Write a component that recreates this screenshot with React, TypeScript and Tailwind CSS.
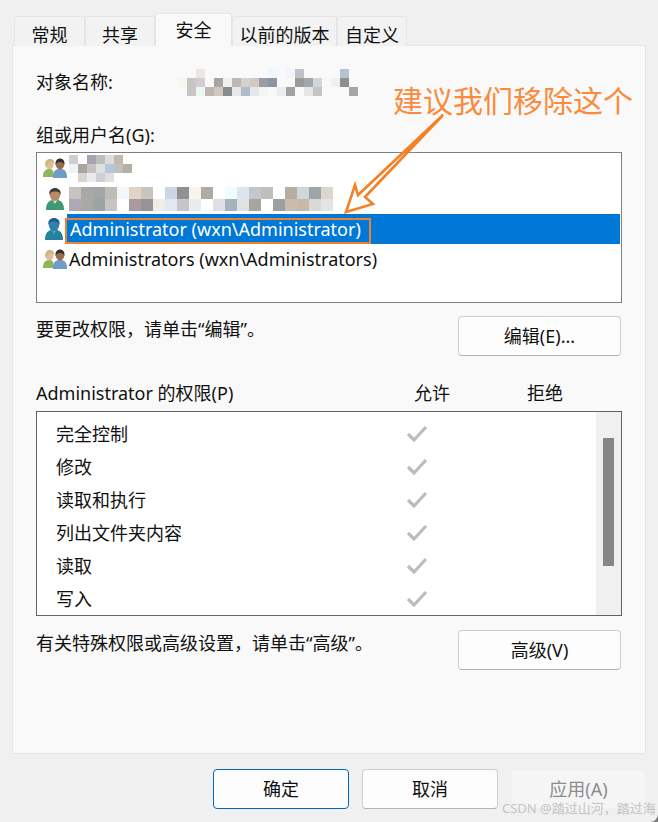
const blur1 = [
  ["", "", "#ece5e0", "", "", "", "", "", "", "", "#eff9fb", "", "#f0f5f7", "#bfc2c8", "", "", "", "", "#b5c3d0", ""],
  ["#f8f6ea", "#c6c6c6", "#d0ced2", "", "#a6a6a6", "#f2f0ea", "#bdb9b2", "#d3d2cf", "#d3c9c0", "#9c9ba8", "#8e95a2", "", "", "#9a9a9a", "#a5a7a8", "#cfd6de", "", "#f0f0f0", "#8f8f8c", ""],
  ["", "#c6c6c6", "#eef6f4", "#bdb5ae", "#cfc8c2", "#878d8f", "#e6e7e8", "#aebccb", "#e6e6e8", "#f0f6f2", "", "#e9edf2", "#a3a1a1", "", "#e6e6e6", "#c4c4c4", "", "", "", "#a6a6a6"],
];

const blur2 = [
  ["#cfcfd2", "", "#a5a3ad", "#bdbdbd", "#dcdcd8", "#c2b8ae", ""],
  ["#eef3f6", "#aaa59d", "#c4c2c4", "#dfe0e2", "#b6c6dc", "#c0c0c0", "#b5b0a6"],
  ["", "#d8d4d0", "#eaeaec", "#d0d0d4", "#dfdfdf", "", ""],
];

const blur3 = [
  ["#c6c4c2", "#a9a8a4", "#a3a6a6", "#bdbdb6", "#f2f7fa", "#e2d3c4", "#c8c4be", "#fff", "#ccd6e4", "#8f9196", "#f8f3ec", "#b0aca4", "#fff", "#f0fdfd", "#dde6ee", "#c4c6cc", "#c0bfbd", "", "#b6ad9e", "#d0d6da", "#9fa4a6", "#dcd6d0"],
  ["#aea8b4", "#aaa8a6", "#9ea2a2", "#c6c4c4", "", "#a89a9e", "#989494", "#f0ece8", "#e2e8f0", "#c6c6c8", "#e8ecee", "", "#e0dfe3", "#a8b2bc", "#e0e2e2", "#a8a4a0", "", "#9ca0a0", "#c8bcae", "#c8b8a8", "#d8d8d8", "#e4e4e4"],
];

function Mosaic({ rows, cell = 9 }: { rows: string[][]; cell?: number }) {
  const cols = rows[0].length;
  return (
    <svg width={cols * cell} height={rows.length * cell} className="block shrink-0">
      {rows.map((row, y) =>
        row.map((color, x) =>
          color ? <rect key={`${x}-${y}`} x={x * cell} y={y * cell} width={cell} height={cell} fill={color} /> : null
        )
      )}
    </svg>
  );
}

function SinglePerson({ selected }: { selected?: boolean }) {
  const hair = selected ? "#1d5f8c" : "#3a3a36";
  const face = selected ? "#2f7fb0" : "#b98a68";
  const body = selected ? "#23829f" : "#3f9a72";
  return (
    <svg width="24" height="24" viewBox="0 0 24 24" className="block shrink-0">
      <path d="M3 23c0-6 2-9 6-10h6c4 1 6 4 6 10z" fill={body} />
      <path d="M9.5 13l2.5 4 2.5-4z" fill={selected ? "#4aa3c4" : "#cfe6d8"} />
      <ellipse cx="12" cy="8" rx="5.2" ry="6" fill={face} />
      <path d="M6.5 8C5.5 3 9 1 12 1s6.5 2 5.5 7c-1-2.500-2-3.500-5.500-3.500S7.500 5.500 6.500 8z" fill={hair} />
    </svg>
  );
}

function GroupPeople() {
  return (
    <svg width="24" height="20" viewBox="0 0 24 20" className="block shrink-0">
      <path d="M0 19c0-5 1.500-7 5-8h3c2 1 3 3 3 8z" fill="#8fb45c" />
      <ellipse cx="6.500" cy="6.500" rx="4" ry="5" fill="#e0bd95" />
      <path d="M2.500 9C1.500 3 4 1 7 1s4.500 2 4 5c-1-1.500-3-2.500-5-2.500-.5 2-2 3-3.500 5.500z" fill="#c9b67c" />
      <path d="M10 20c0-6 1.500-8 5-9h4c3.500 1 5 3 5 9z" fill="#6f9cc8" />
      <ellipse cx="17" cy="6.500" rx="4.200" ry="5" fill="#9a6c4c" />
      <path d="M12.500 7C12 2.500 14.500 0.500 17 0.500S22 2.500 21.500 7c-1-2-2-3-4.500-3s-3.500 1-4.500 3z" fill="#33302c" />
    </svg>
  );
}

function Check() {
  return (
    <svg width="22" height="20" viewBox="0 0 22 20" className="block">
      <path d="M2 10l6 6L20 3" fill="none" stroke="#bcbcbc" strokeWidth="3.200" />
    </svg>
  );
}

function Tab({ label, width }: { label: string; width: string }) {
  return (
    <div className={`${width} h-[30px] bg-[#f2f2f2] border border-b-0 border-[#e5e5e5] rounded-t-[2px] flex items-center justify-center text-[18px] leading-[26px] pt-[6px]`}>
      {label}
    </div>
  );
}

function Btn({ label, width, primary, disabled }: { label: string; width: string; primary?: boolean; disabled?: boolean }) {
  const tone = primary
    ? "bg-[#fdfdfd] border-[#0067c0] text-[#111]"
    : disabled
      ? "bg-[#f5f5f5] border-[#efefef] text-[#8c8c8c]"
      : "bg-[#fdfdfd] border-[#cfcfcf] border-b-[#b4b4b4] text-[#111]";
  return (
    <button className={`${width} h-[40px] rounded-[4px] border flex items-center justify-center text-[18px] ${tone}`}>
      {label}
    </button>
  );
}

const permissions = ["完全控制", "修改", "读取和执行", "列出文件夹内容", "读取", "写入"];

export default function App() {
  return (
    <div className="bg-[#7a7a7a] w-[658px] h-[822px]">
      <div className="relative w-[658px] h-[822px] overflow-hidden rounded-br-[8px] bg-[#f0f0f0] text-[#111] font-['Noto_Sans','Noto_Sans_CJK_SC',sans-serif]">
        {/* Tabs */}
        <div className="flex items-end h-[46px] pl-[14px] relative z-10 -mb-px">
          <Tab label="常规" width="w-[71px]" />
          <Tab label="共享" width="w-[70px]" />
          <div className="w-[77px] h-[33px] bg-[#f9f9f9] border border-b-0 border-[#e5e5e5] rounded-t-[2px] flex items-center justify-center text-[18px] leading-[26px]">
            安全
          </div>
          <Tab label="以前的版本" width="w-[105px]" />
          <Tab label="自定义" width="w-[70px]" />
        </div>

        {/* Panel */}
        <div className="ml-[12px] w-[634px] h-[709px] bg-[#f9f9f9] border border-[#e5e5e5] px-[23px] text-[18px] leading-[26px]">
          <div className="flex items-center h-[26px] mt-[23px]">
            <div className="w-[142px]">对象名称:</div>
            <Mosaic rows={blur1} />
          </div>

          <div className="h-[26px] mt-[27px]">组或用户名(G):</div>

          <div className="mt-[4px] h-[151px] w-[586px] bg-white border border-[#808080]">
            <div className="flex items-center h-[30px] pl-[6px] gap-[2px]">
              <GroupPeople />
              <Mosaic rows={blur2} />
            </div>
            <div className="flex items-center h-[31px] pl-[6px] gap-[2px]">
              <SinglePerson />
              <Mosaic rows={blur3} cell={12} />
            </div>
            <div className="flex items-center h-[30px] pl-[5px] gap-[1px]">
              <SinglePerson selected />
              <div className="flex-1 h-[30px] mr-px pl-[3px] flex items-center bg-[#0078d7] text-white">
                Administrator (wxn\Administrator)
              </div>
            </div>
            <div className="flex items-center h-[30px] pl-[6px] gap-[1px]">
              <GroupPeople />
              <span className="pl-[1px]">Administrators (wxn\Administrators)</span>
            </div>
          </div>

          <div className="flex justify-between mt-[13px] w-[585px]">
            <div className="pt-[-1px]">要更改权限，请单击“编辑”。</div>
            <Btn label="编辑(E)..." width="w-[163px]" />
          </div>

          <div className="flex h-[26px] mt-[24px]">
            <div className="w-[378px]">Administrator 的权限(P)</div>
            <div className="w-[113px]">允许</div>
            <div>拒绝</div>
          </div>

          <div className="flex mt-[5px] h-[205px] w-[586px] bg-white border border-[#636363]">
            <div className="flex-1 pt-[5px]">
              {permissions.map((name) => (
                <div key={name} className="flex items-center h-[33px]">
                  <div className="w-[369px] pl-[19px]">{name}</div>
                  <Check />
                </div>
              ))}
            </div>
            <div className="w-[25px] bg-[#f0f0f0] pt-[26px] pl-[7px]">
              <div className="w-[11px] h-[128px] bg-[#868686]"></div>
            </div>
          </div>

          <div className="flex justify-between mt-[14px] w-[585px]">
            <div>有关特殊权限或高级设置，请单击“高级”。</div>
            <Btn label="高级(V)" width="w-[163px]" />
          </div>
        </div>

        {/* Footer buttons */}
        <div className="flex justify-end gap-[13px] mt-[15px] pr-[12px]">
          <Btn label="确定" width="w-[136px]" primary />
          <Btn label="取消" width="w-[136px]" />
          <Btn label="应用(A)" width="w-[135px]" disabled />
        </div>

        {/* Annotation drawn over the screenshot */}
        <div className="absolute left-[393px] top-[80px] text-[30px] leading-[42px] text-[#fb8a3c] whitespace-nowrap z-20">
          建议我们移除这个
        </div>
        <div className="absolute left-[65px] top-[218px] w-[306px] h-[26px] border-2 border-[#f0802a] z-20"></div>
        <svg className="absolute left-[340px] top-[110px] z-20" width="110" height="110" viewBox="340 110 110 110">
          <path d="M443 115L358 195L355 185L346 212L373 204L365 197Z" fill="none" stroke="#f58026" strokeWidth="2.600" />
        </svg>
        <div className="absolute left-[502px] top-[799px] text-[13px] leading-[18px] text-[#c4c4c4] whitespace-nowrap z-20">
          CSDN @踏过山河，踏过海
        </div>
      </div>
    </div>
  );
}
